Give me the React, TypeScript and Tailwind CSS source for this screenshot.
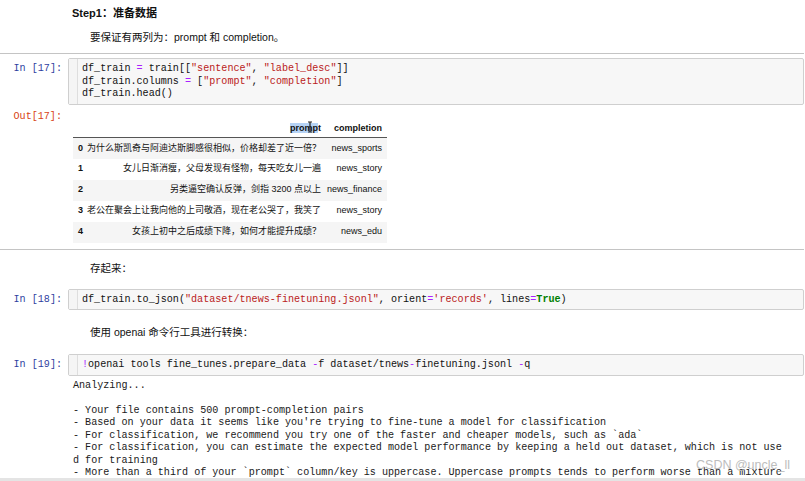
import React from "react";

type Tok = [string, string?];

const MONO = { fontFamily: '"Liberation Mono", "DejaVu Sans Mono", monospace' };
const SANS = { fontFamily: '"Liberation Sans", "Noto Sans CJK SC", sans-serif' };

const S = "text-[#ba2121]";
const O = "text-[#aa22ff]";
const K = "text-[#008000] font-bold";

const CodeLine: React.FC<{ toks: Tok[] }> = ({ toks }) => (
  <div className="whitespace-pre h-[12.5px]">
    {toks.map(([t, c], i) => (
      <span key={i} className={c}>
        {t}
      </span>
    ))}
  </div>
);

const InCell: React.FC<{ n: number; lines: Tok[][] }> = ({ n, lines }) => (
  <div className="flex" style={MONO}>
    <div className="w-[68px] shrink-0 pr-[6px] pt-[5px] text-right text-[10.1px] leading-[12.5px] text-[#303f9f]">
      In [{n}]:
    </div>
    <div className="flex flex-1 rounded-[2px] border border-[#cfcfcf] bg-[#f7f7f7]">
      <div className="w-[9px] shrink-0 border-r border-[#dedede] bg-[#f5f5f5]" />
      <div className="pl-[4px] pt-[4px] pb-[3px] text-[10.1px] leading-[12.5px] text-[#111]">
        {lines.map((l, i) => (
          <CodeLine key={i} toks={l} />
        ))}
      </div>
    </div>
  </div>
);

const rows = [
  ["0", "为什么斯凯奇与阿迪达斯脚感很相似，价格却差了近一倍？", "news_sports"],
  ["1", "女儿日渐消瘦，父母发现有怪物，每天吃女儿一遍", "news_story"],
  ["2", "另类逼空确认反弹，剑指 3200 点以上", "news_finance"],
  ["3", "老公在聚会上让我向他的上司敬酒，现在老公哭了，我笑了", "news_story"],
  ["4", "女孩上初中之后成绩下降，如何才能提升成绩？", "news_edu"],
];

const output = [
  "Analyzing...",
  "",
  "- Your file contains 500 prompt-completion pairs",
  "- Based on your data it seems like you're trying to fine-tune a model for classification",
  "- For classification, we recommend you try one of the faster and cheaper models, such as `ada`",
  "- For classification, you can estimate the expected model performance by keeping a held out dataset, which is not use",
  "d for training",
  "- More than a third of your `prompt` column/key is uppercase. Uppercase prompts tends to perform worse than a mixture",
];

export default function App() {
  return (
    <div className="relative h-[481px] w-[805px] overflow-hidden bg-white pr-[1px]" style={SANS}>
      {/* markdown: step 1 */}
      <div className="pt-[6px] pl-[72px] text-[11px] font-bold leading-[14px] text-[#111]">
        Step1：准备数据
      </div>
      <div className="mt-[10px] pl-[90px] text-[10.5px] leading-[14px] text-[#111]">
        要保证有两列为：prompt 和 completion。
      </div>
      <div className="mt-[9px] h-px bg-[#c4c4c4]" />

      <div className="mt-[4px]">
        <InCell
          n={17}
          lines={[
            [["df_train "], ["=", O], [" train[["], ['"sentence"', S], [", "], ['"label_desc"', S], ["]]"]],
            [["df_train.columns "], ["=", O], [" ["], ['"prompt"', S], [", "], ['"completion"', S], ["]"]],
            [["df_train.head()"]],
          ]}
        />
      </div>

      {/* output table */}
      <div className="mt-[6px] flex">
        <div
          className="w-[68px] shrink-0 pr-[6px] text-right text-[10.1px] leading-[12.5px] text-[#d84315]"
          style={MONO}
        >
          Out[17]:
        </div>
        <div className="relative pt-[9px] pl-[5px]">
          <table className="border-collapse text-[9px] text-[#111]">
            <thead>
              <tr className="h-[18px] border-b border-[#555]">
                <th className="w-[14px]" />
                <th className="w-[238px] pr-[5px] text-right font-bold">
                  <span className="bg-[#b6d3f5]">promp</span>t
                </th>
                <th className="w-[61px] pr-[5px] text-right font-bold">completion</th>
              </tr>
            </thead>
            <tbody>
              {rows.map((r, i) => (
                <tr key={r[0]} className={`h-[21px] ${i % 2 === 0 ? "bg-[#f5f5f5]" : "bg-white"}`}>
                  <td className="pl-[5px] font-bold">{r[0]}</td>
                  <td className="whitespace-nowrap pr-[5px] text-right">{r[1]}</td>
                  <td className="whitespace-nowrap pr-[5px] text-right">{r[2]}</td>
                </tr>
              ))}
            </tbody>
          </table>
          <svg className="absolute left-[239px] top-[10px]" width="6" height="12" viewBox="0 0 6 12">
            <path d="M1 1h4M3 1v10M1 11h4" stroke="#222" strokeWidth="1.2" fill="none" />
          </svg>
        </div>
      </div>
      <div className="mt-[6px] h-px bg-[#c4c4c4]" />

      {/* markdown: save */}
      <div className="mt-[11px] pl-[90px] text-[10.5px] leading-[14px] text-[#111]">存起来：</div>
      <div className="mt-[14px]">
        <InCell
          n={18}
          lines={[
            [
              ["df_train.to_json("],
              ['"dataset/tnews-finetuning.jsonl"', S],
              [", orient"],
              ["=", O],
              ["'records'", S],
              [", lines"],
              ["=", O],
              ["True", K],
              [")"],
            ],
          ]}
        />
      </div>

      <div className="mt-[15px] pl-[90px] text-[10.5px] leading-[14px] text-[#111]">
        使用 openai 命令行工具进行转换：
      </div>
      <div className="mt-[15px]">
        <InCell
          n={19}
          lines={[
            [
              ["!", O],
              ["openai tools fine_tunes.prepare_data "],
              ["-", O],
              ["f dataset/tnews"],
              ["-", O],
              ["finetuning.jsonl "],
              ["-", O],
              ["q"],
            ],
          ]}
        />
      </div>

      {/* stream output */}
      <div className="mt-[4px] pl-[73px] text-[10.1px] leading-[12.5px] text-[#1a1a1a]" style={MONO}>
        {output.map((l, i) => (
          <div key={i} className="h-[12.5px] whitespace-pre">
            {l}
          </div>
        ))}
      </div>

      <div className="absolute bottom-0 left-0 h-[3px] w-full bg-[#e4e4e4]" />
      <div className="absolute right-[15px] top-[457px] text-[12.5px] leading-[16px] text-[#bdbdbd]">
        CSDN @uncle_ll
      </div>
    </div>
  );
}
